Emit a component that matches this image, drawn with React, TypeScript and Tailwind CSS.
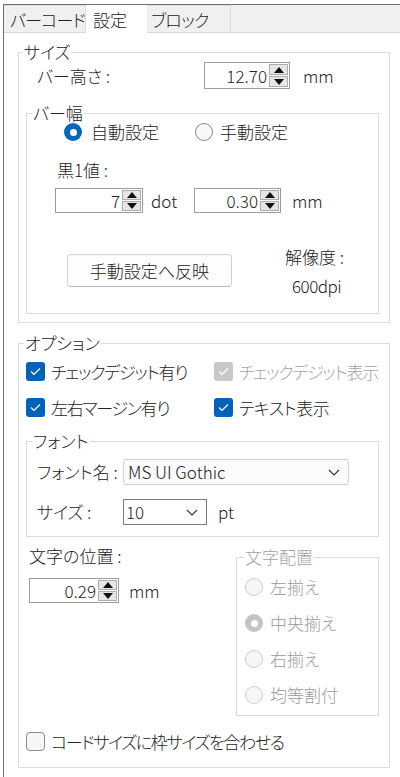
import React from "react";

const font = "font-['Noto_Sans_CJK_JP','Noto_Sans',sans-serif] [font-feature-settings:'palt'] font-light";

function SpinBox({ value, w, h }: { value: string; w: string; h: string }) {
  return (
    <div className={`${w} ${h} flex border border-[#9c9c9c] bg-white`}>
      <div className="flex-1 flex items-center justify-end pr-[2px] leading-[20px]">{value}</div>
      <div className="w-[20px] flex flex-col gap-[1px] py-[1px] pr-[1px]">
        <div className="flex-1 flex items-center justify-center bg-[#e6e6e6] border border-[#adadad]">
          <svg width="10" height="6" viewBox="0 0 10 6">
            <path d="M5 0 L10 6 L0 6 Z" fill="#111" />
          </svg>
        </div>
        <div className="flex-1 flex items-center justify-center bg-[#e6e6e6] border border-[#adadad]">
          <svg width="10" height="6" viewBox="0 0 10 6">
            <path d="M0 0 L10 0 L5 6 Z" fill="#111" />
          </svg>
        </div>
      </div>
    </div>
  );
}

function Radio({ checked, disabled }: { checked?: boolean; disabled?: boolean }) {
  if (checked) {
    return (
      <div
        className={`w-[18px] h-[18px] rounded-full flex items-center justify-center ${
          disabled ? "bg-[#c4c4c4]" : "bg-[#0067c0]"
        }`}
      >
        <div className="w-[7px] h-[7px] rounded-full bg-white" />
      </div>
    );
  }
  return (
    <div
      className={`w-[18px] h-[18px] rounded-full border ${
        disabled ? "border-[#cfcfcf] bg-[#f6f6f6]" : "border-[#8a8a8a] bg-[#f8f8f8]"
      }`}
    />
  );
}

function Check({ checked, disabled }: { checked?: boolean; disabled?: boolean }) {
  if (!checked) {
    return <div className="w-[19px] h-[19px] rounded-[4px] border border-[#8a8a8a] bg-[#f7f7f7]" />;
  }
  return (
    <div
      className={`w-[19px] h-[19px] rounded-[3px] flex items-center justify-center ${
        disabled ? "bg-[#c8c8c8]" : "bg-[#0062b8]"
      }`}
    >
      <svg width="11" height="9" viewBox="0 0 11 9">
        <path d="M1 4.5 L4 7.5 L10 1.5" stroke="white" strokeWidth="1.2" fill="none" />
      </svg>
    </div>
  );
}

function Chevron() {
  return (
    <svg width="12" height="7" viewBox="0 0 12 7">
      <path d="M1 1 L6 6 L11 1" stroke="#333" strokeWidth="1.1" fill="none" />
    </svg>
  );
}

export default function App() {
  return (
    <div className={`w-[400px] h-[777px] bg-white overflow-hidden text-[17px] text-[#222] whitespace-nowrap ${font}`}>
      <div className="ml-[3px] mt-[4px] h-[773px] border-l border-t border-[#6e6e6e]">
        {/* tabs */}
        <div className="h-[28px] flex bg-[#f0f0f0] border-b border-[#d9d9d9]">
          <div className="w-[82px] h-full flex items-center pl-[6px] pt-[2px] border-t border-r border-[#dedede] leading-[20px] tracking-[-0.8px]">
            バーコード
          </div>
          <div className="w-[61px] h-[28px] flex items-center pl-[7px] pt-[2px] bg-white leading-[20px] relative z-10">
            設定
          </div>
          <div className="w-[84px] h-full flex items-center pl-[4px] pt-[2px] border-t border-r border-[#dedede] leading-[20px] tracking-[-0.6px]">
            ブロック
          </div>
        </div>

        {/* サイズ */}
        <fieldset className="ml-[14px] mt-[9px] w-[372px] border border-[#dcdcdc] p-0 pb-[8px]">
          <legend className="ml-[4px] px-[1px] leading-[20px]">サイズ</legend>
          <div className="flex items-center h-[27px]">
            <span className="ml-[18px] w-[167px] leading-[20px]">バー高さ :</span>
            <SpinBox value="12.70" w="w-[86px]" h="h-[27px]" />
            <span className="ml-[13px] leading-[20px]">mm</span>
          </div>

          <fieldset className="ml-[7px] mt-[14px] w-[353px] border border-[#dcdcdc] p-0 pb-[17px]">
            <legend className="ml-[5px] px-[1px] leading-[20px]">バー幅</legend>
            <div className="flex items-center h-[18px] pl-[37px]">
              <div className="w-[131px] flex items-center">
                <Radio checked />
                <span className="ml-[9px] leading-[20px]">自動設定</span>
              </div>
              <div className="flex items-center">
                <Radio />
                <span className="ml-[7px] leading-[20px]">手動設定</span>
              </div>
            </div>
            <div className="ml-[30px] mt-[19px] leading-[20px]">黒1値 :</div>
            <div className="flex items-center ml-[28px] mt-[8px] h-[25px]">
              <SpinBox value="7" w="w-[88px]" h="h-[25px]" />
              <span className="w-[51px] pl-[8px] leading-[20px]">dot</span>
              <SpinBox value="0.30" w="w-[87px]" h="h-[25px]" />
              <span className="pl-[11px] leading-[20px]">mm</span>
            </div>
            <div className="flex items-start mt-[34px]">
              <button className="ml-[40px] mt-[7px] w-[165px] h-[33px] rounded-[4px] border border-[#d0d0d0] border-b-[#b8b8b8] bg-[#fdfdfd] flex items-center justify-center leading-[20px]">
                手動設定へ反映
              </button>
              <div className="ml-[53px] flex flex-col">
                <span className="leading-[20px]">解像度 :</span>
                <span className="leading-[20px] mt-[9px] pl-[7px] tracking-[-0.5px]">600dpi</span>
              </div>
            </div>
          </fieldset>
        </fieldset>

        {/* オプション */}
        <fieldset className="ml-[14px] mt-[10px] w-[372px] border border-[#dcdcdc] p-0 pb-[16px]">
          <legend className="ml-[5px] px-[1px] leading-[20px]">オプション</legend>
          <div className="flex items-center mt-[9px] h-[19px] pl-[7px]">
            <div className="w-[188px] flex items-center">
              <Check checked />
              <span className="ml-[6px] leading-[20px] tracking-[-1.2px]">チェックデジット有り</span>
            </div>
            <div className="flex items-center">
              <Check checked disabled />
              <span className="ml-[6px] leading-[20px] text-[#a3a3a3] tracking-[-1.2px]">チェックデジット表示</span>
            </div>
          </div>
          <div className="flex items-center mt-[17px] h-[19px] pl-[7px]">
            <div className="w-[188px] flex items-center">
              <Check checked />
              <span className="ml-[6px] leading-[20px] tracking-[-1.3px]">左右マージン有り</span>
            </div>
            <div className="flex items-center">
              <Check checked />
              <span className="ml-[6px] leading-[20px] tracking-[-0.5px]">テキスト表示</span>
            </div>
          </div>

          <fieldset className="ml-[7px] mt-[14px] w-[353px] border border-[#dcdcdc] p-0 pb-[11px]">
            <legend className="ml-[5px] px-[1px] leading-[20px]">フォント</legend>
            <div className="flex items-center mt-[8px] h-[26px]">
              <span className="ml-[10px] w-[86px] leading-[20px]">フォント名 :</span>
              <div className="w-[226px] h-[26px] rounded-[3px] border border-[#d3d3d3] bg-[#fbfbfb] flex items-center justify-between pl-[4px] pr-[8px]">
                <span className="leading-[20px]">MS UI Gothic</span>
                <Chevron />
              </div>
            </div>
            <div className="flex items-center mt-[14px] h-[26px]">
              <span className="ml-[10px] w-[86px] leading-[20px]">サイズ :</span>
              <div className="w-[84px] h-[26px] border border-[#7a7a7a] bg-white flex items-center justify-between pl-[2px] pr-[8px]">
                <span className="leading-[20px]">10</span>
                <Chevron />
              </div>
              <span className="ml-[11px] leading-[20px]">pt</span>
            </div>
          </fieldset>

          <div className="flex items-start">
            <div className="w-[217px] pl-[10px] pt-[9px]">
              <div className="leading-[20px]">文字の位置 :</div>
              <div className="flex items-center mt-[12px]">
                <SpinBox value="0.29" w="w-[90px]" h="h-[25px]" />
                <span className="ml-[10px] leading-[20px]">mm</span>
              </div>
            </div>
            <fieldset className="mt-[10px] w-[143px] border border-[#dcdcdc] p-0 pb-[11px] text-[#a3a3a3]">
              <legend className="ml-[7px] px-[1px] leading-[20px]">文字配置</legend>
              {[
                { t: "左揃え", c: false },
                { t: "中央揃え", c: true },
                { t: "右揃え", c: false },
                { t: "均等割付", c: false },
              ].map((r, i) => (
                <div
                  key={r.t}
                  className={`flex items-center h-[18px] pl-[8px] ${i === 0 ? "mt-[11px]" : "mt-[18px]"}`}
                >
                  <Radio checked={r.c} disabled />
                  <span className="ml-[7px] leading-[20px] text-[#9a9a9a]">{r.t}</span>
                </div>
              ))}
            </fieldset>
          </div>

          <div className="flex items-center mt-[16px] h-[19px] pl-[7px]">
            <Check />
            <span className="ml-[6px] leading-[20px] tracking-[-1.3px]">コードサイズに枠サイズを合わせる</span>
          </div>
        </fieldset>
      </div>
    </div>
  );
}
